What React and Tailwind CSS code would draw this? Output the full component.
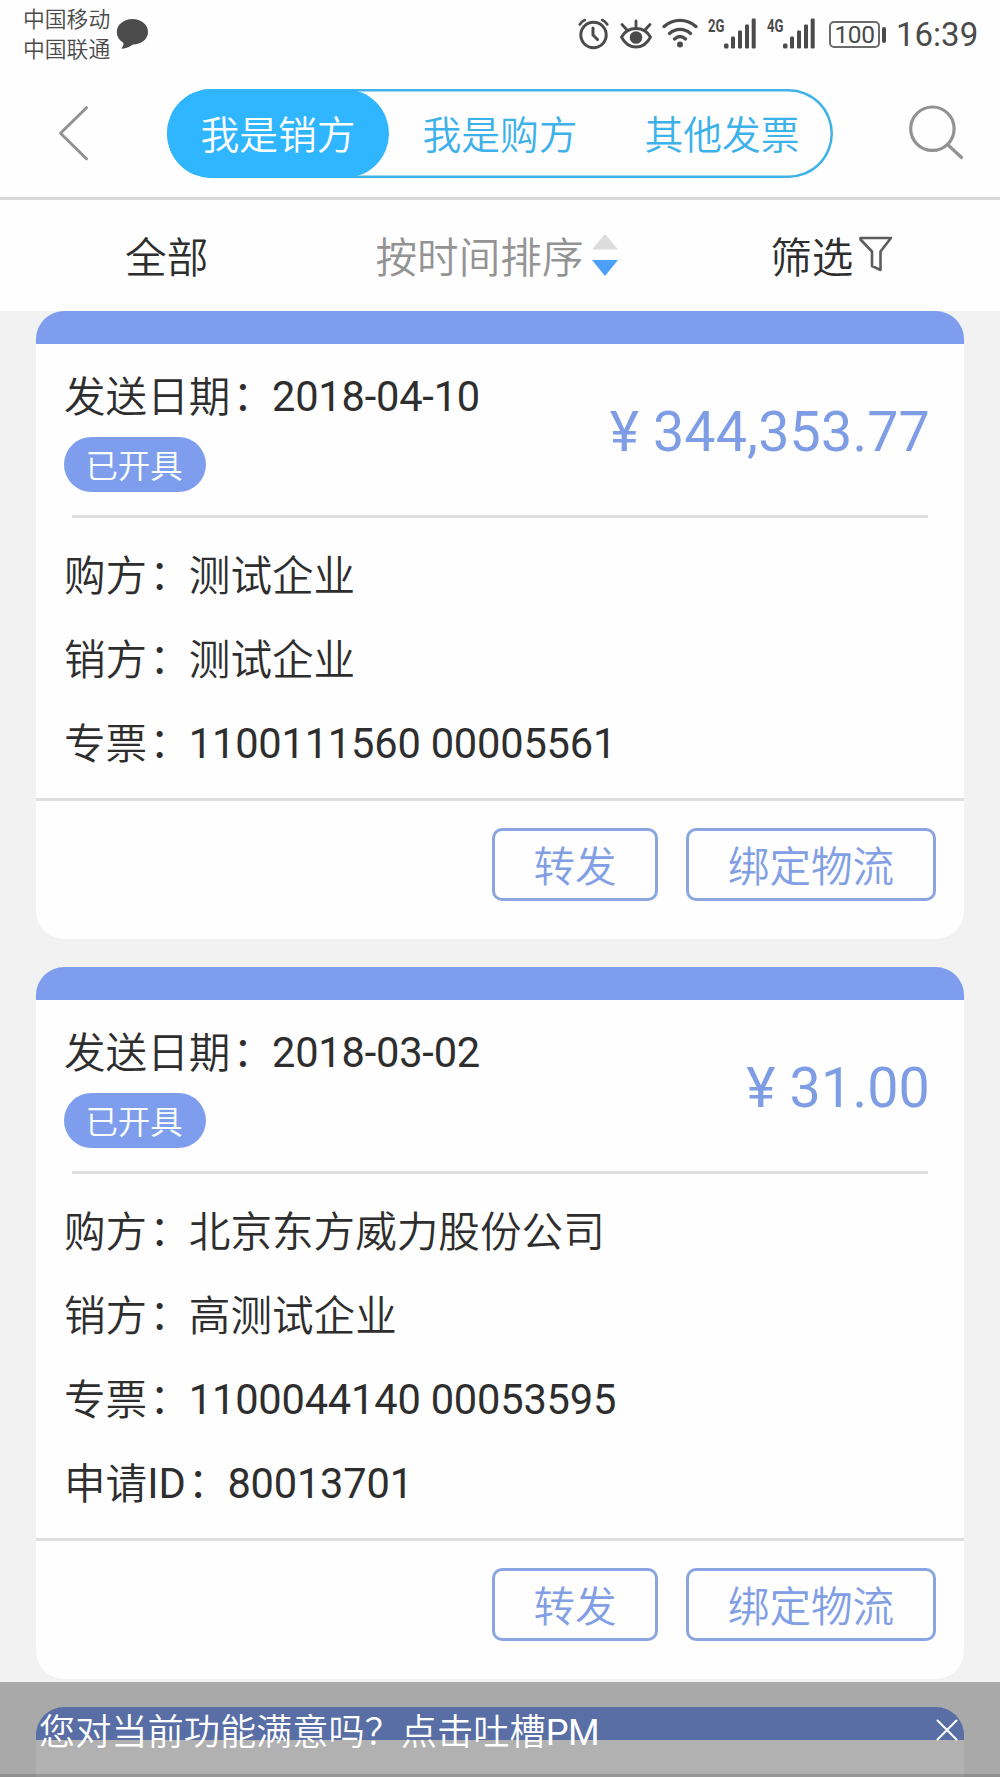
import React from "react";

const invoices = [
  {
    date: "2018-04-10",
    amount: "344,353.77",
    rows: [
      ["购方", "测试企业"],
      ["销方", "测试企业"],
      ["专票", "1100111560 00005561"],
    ],
  },
  {
    date: "2018-03-02",
    amount: "31.00",
    rows: [
      ["购方", "北京东方威力股份公司"],
      ["销方", "高测试企业"],
      ["专票", "1100044140 00053595"],
      ["申请ID", "80013701"],
    ],
  },
];

function Signal({ label }) {
  return (
    <svg className="h-8 w-12 shrink-0 overflow-visible" viewBox="0 0 48 32" fill="#4b4b4b">
      <text x="0" y="13.5" fontSize="18.5" fontWeight="700" fontFamily="Roboto, sans-serif" textLength="16.5" lengthAdjust="spacingAndGlyphs">
        {label}
      </text>
      <rect x="16" y="25.5" width="4.5" height="5" rx="1.5" />
      <rect x="23" y="18.5" width="4" height="12" rx="1.2" />
      <rect x="30" y="12.5" width="4" height="18" rx="1.2" />
      <rect x="37" y="6.5" width="4" height="24" rx="1.2" />
      <rect x="43.7" y="0.5" width="4" height="30" rx="1.2" />
    </svg>
  );
}

function StatusBar() {
  return (
    <div className="flex h-[68px] shrink-0 items-start text-[#4b4b4b]">
      <div className="ml-[23px] mt-[5px] w-[88px] whitespace-nowrap text-[21.8px] font-[350] leading-[30px]">
        <div>中国移动</div>
        <div>中国联通</div>
      </div>
      <svg className="ml-[5px] mt-[18px] h-8 w-8" viewBox="0 0 32 32" fill="#4b4b4b">
        <path d="M16.500 1C25 1 32 6.500 32 14S25 26.500 17 26.500C15.500 27.500 11 30.500 6.500 30.700C5.600 30.700 5.500 30 6 29.500C7.300 28 7.700 26.500 7.400 24.700C3.500 22.500 .8 18.500 .8 14C.8 6.500 8 1 16.500 1Z" />
      </svg>
      <div className="ml-[430px] mt-[18px] flex">
        <svg className="h-8 w-8 shrink-0" viewBox="0 0 32 32" fill="none" stroke="#4b4b4b" strokeWidth="3" strokeLinecap="round">
          <circle cx="15.500" cy="17" r="12.700" />
          <path d="M15 10v7l4.500 4.500" />
          <path d="M1.700 6.500C3 4.500 4.500 3 6.800 2M29.300 6.500C28 4.500 26.500 3 24.200 2" strokeWidth="2.600" />
        </svg>
        <svg className="ml-2.5 h-8 w-8 shrink-0" viewBox="0 0 32 32" fill="none" stroke="#4b4b4b" strokeWidth="2.800" strokeLinecap="round">
          <path d="M1.500 19C5 13 10 10.500 16 10.500S27 13 30.500 19C27 26 22 29 16 29S5 26 1.500 19Z" />
          <circle cx="16" cy="19.500" r="6.300" fill="#4b4b4b" stroke="none" />
          <path d="M16 10V3M7.500 12.500L2 6.500M24.500 12.500L30 6.500" />
        </svg>
        <svg className="ml-2.5 h-8 w-9 shrink-0" viewBox="0 0 36 32" fill="none" stroke="#4b4b4b" strokeWidth="3.200" strokeLinecap="round">
          <path d="M2 8.500C11 .2 25 .2 34 8.500M7.500 15.500C13.500 10 22.500 10 28.500 15.500M12.500 21C16 17.800 20 17.800 23.500 21" />
          <circle cx="18" cy="26.500" r="3" fill="#4b4b4b" stroke="none" />
        </svg>
        <div className="ml-2.5">
          <Signal label="2G" />
        </div>
        <div className="ml-[11px]">
          <Signal label="4G" />
        </div>
        <div className="ml-3.5 mt-[3px] flex h-[27px] w-[51px] items-center justify-center rounded-[5px] border-2 border-[#6b6b6b] text-[24.5px] leading-[27px] tracking-[-0.4px]">
          100
        </div>
        <div className="ml-0.5 mt-[9px] h-4 w-[4px] rounded-[2px] bg-[#4b4b4b]" />
        <div className="ml-[10px] mt-px text-[33px] leading-8">16:39</div>
      </div>
    </div>
  );
}

function TopBar() {
  return (
    <div className="flex h-[132px] shrink-0 items-start border-b-[3px] border-[#d9d9d9]">
      <svg className="ml-[58px] mt-[37px] h-14 w-8" viewBox="0 0 32 56" fill="none" stroke="#929292" strokeWidth="3" strokeLinecap="round" strokeLinejoin="round">
        <path d="M28.500 2.700L2.500 28.200L28.500 53.700" />
      </svg>
      <div className="ml-[77px] mt-[21px] grid h-[88.500px] w-[666px] grid-cols-3 rounded-full text-center text-[38.8px] font-[350] leading-[94px] text-[#3db1ea] shadow-[inset_0_0_0_2.5px_#3fb2e8]">
        <div className="h-[88.500px] rounded-full bg-[#2fb6ff] text-white">我是销方</div>
        <div>我是购方</div>
        <div>其他发票</div>
      </div>
      <svg className="ml-[75px] mt-[36px] h-14 w-14" viewBox="0 0 56 56" fill="none" stroke="#929292" strokeWidth="3.200" strokeLinecap="round">
        <circle cx="24.400" cy="24.700" r="21.700" />
        <path d="M39.500 40.500L53.500 53.500" />
      </svg>
    </div>
  );
}

function FilterBar() {
  return (
    <div className="grid h-[111px] shrink-0 grid-cols-3 text-[41.6px] font-[350] leading-[117px] text-[#2e2e2e]">
      <div className="text-center">全部</div>
      <div className="flex justify-center pr-[6px] text-[#939393]">
        <span>按时间排序</span>
        <svg className="ml-[9px] mt-[33px] h-11 w-[26px]" viewBox="0 0 26 44">
          <path d="M13 1L26 16.500H0Z" fill="#dcdcdc" />
          <path d="M0 27H26L13 43Z" fill="#4ca0f8" />
        </svg>
      </div>
      <div className="flex justify-center pr-[3px]">
        <span>筛选</span>
        <svg className="ml-[6px] mt-[36px] h-9 w-[34px]" viewBox="0 0 34 36" fill="none" stroke="#5d5d5d" strokeWidth="2.600" strokeLinejoin="round">
          <path d="M1.500 2H32L21.500 15.500V34L13 30V15.500L1.500 3.500Z" />
        </svg>
      </div>
    </div>
  );
}

function Button({ children }) {
  return (
    <button className="h-[73px] w-[166px] rounded-[10px] border-[3px] border-[#8aa6e2] text-center text-[41.6px] font-[350] leading-[73px] text-[#829fe6] last:w-[250px]">
      {children}
    </button>
  );
}

function Field({ label, value }) {
  const numeric = /^[\d\s-]+$/.test(value);
  const [, han, latin] = label.match(/^([^A-Z]*)([A-Z]*)$/);
  return (
    <div className="flex whitespace-nowrap">
      <span className="pt-[2px] font-[350]">{han}</span>
      {latin && <span className="pt-px">{latin}</span>}
      <span className="w-[41.600px] pl-[2px] pt-px font-[350]">：</span>
      {numeric ? (
        <span className="pt-px tracking-[-0.2px]">{value}</span>
      ) : (
        <span className="pt-[2px] font-[350]">{value}</span>
      )}
    </div>
  );
}

function InvoiceCard({ invoice }) {
  return (
    <div className="mx-9 mb-7 shrink-0 overflow-hidden rounded-[28px] bg-[#fefefe] text-[41.6px] text-[#2e2e2e]">
      <div className="h-[33px] bg-[#7e9eed]" />
      <div className="flex h-[171px] justify-between px-7">
        <div>
          <div className="mt-[23px] h-[59px] leading-[58px]">
            <Field label="发送日期" value={invoice.date} />
          </div>
          <div className="mt-[11px] flex h-[55px] w-[142px] items-center justify-center rounded-full bg-[#7e9eed] pr-[2px] pt-[5px] text-[32.4px] font-[350] text-white">
            已开具
          </div>
        </div>
        <div className="mr-[6px] mt-[55px] whitespace-nowrap text-[55.6px] leading-[66px] tracking-[0.15px] text-[#7f9de4]">¥ {invoice.amount}</div>
      </div>
      <div className="mx-9 h-[3px] bg-[#dedede]" />
      <div className="h-[15px]" />
      <div className="px-7">
        {invoice.rows.map(([label, value]) => (
          <div key={label} className="h-[84px] leading-[84px]">
            <Field label={label} value={value} />
          </div>
        ))}
      </div>
      <div className="mt-[13px] flex h-[141px] items-start justify-end gap-7 border-t-[3px] border-[#dedede] pr-7 pt-[27px]">
        <Button>转发</Button>
        <Button>绑定物流</Button>
      </div>
    </div>
  );
}

export default function App() {
  return (
    <div className="relative flex h-[1777px] w-[1000px] flex-col overflow-hidden bg-[#fefefe] font-[Roboto,'Noto_Sans_CJK_SC',sans-serif]" lang="zh-CN">
      <StatusBar />
      <TopBar />
      <FilterBar />
      <div className="flex min-h-0 flex-1 flex-col overflow-hidden bg-[#f2f2f2]">
        {invoices.map((invoice, i) => (
          <InvoiceCard key={i} invoice={invoice} />
        ))}
        <div className="mx-9 min-h-0 flex-1 overflow-hidden rounded-t-[28px] bg-[#fefefe]">
          <div className="h-[33px] bg-[#7e9eed]" />
        </div>
      </div>
      <div className="absolute inset-x-0 bottom-0 flex h-[95px] items-start justify-between border-b-[3px] border-black/15 bg-black/30 pl-[39px] pr-[42px] text-[36.2px] leading-[101px] text-white">
        <span className="font-[350]">
          您对当前功能满意吗？点击吐槽<span className="font-normal tracking-[-0.5px]">PM</span>
        </span>
        <svg className="mt-[37px] h-[22px] w-[22px]" viewBox="0 0 22 22" fill="none" stroke="#fff" strokeWidth="2" strokeLinecap="round">
          <path d="M1.500 1.500L20.500 20.500M20.500 1.500L1.500 20.500" />
        </svg>
      </div>
    </div>
  );
}
